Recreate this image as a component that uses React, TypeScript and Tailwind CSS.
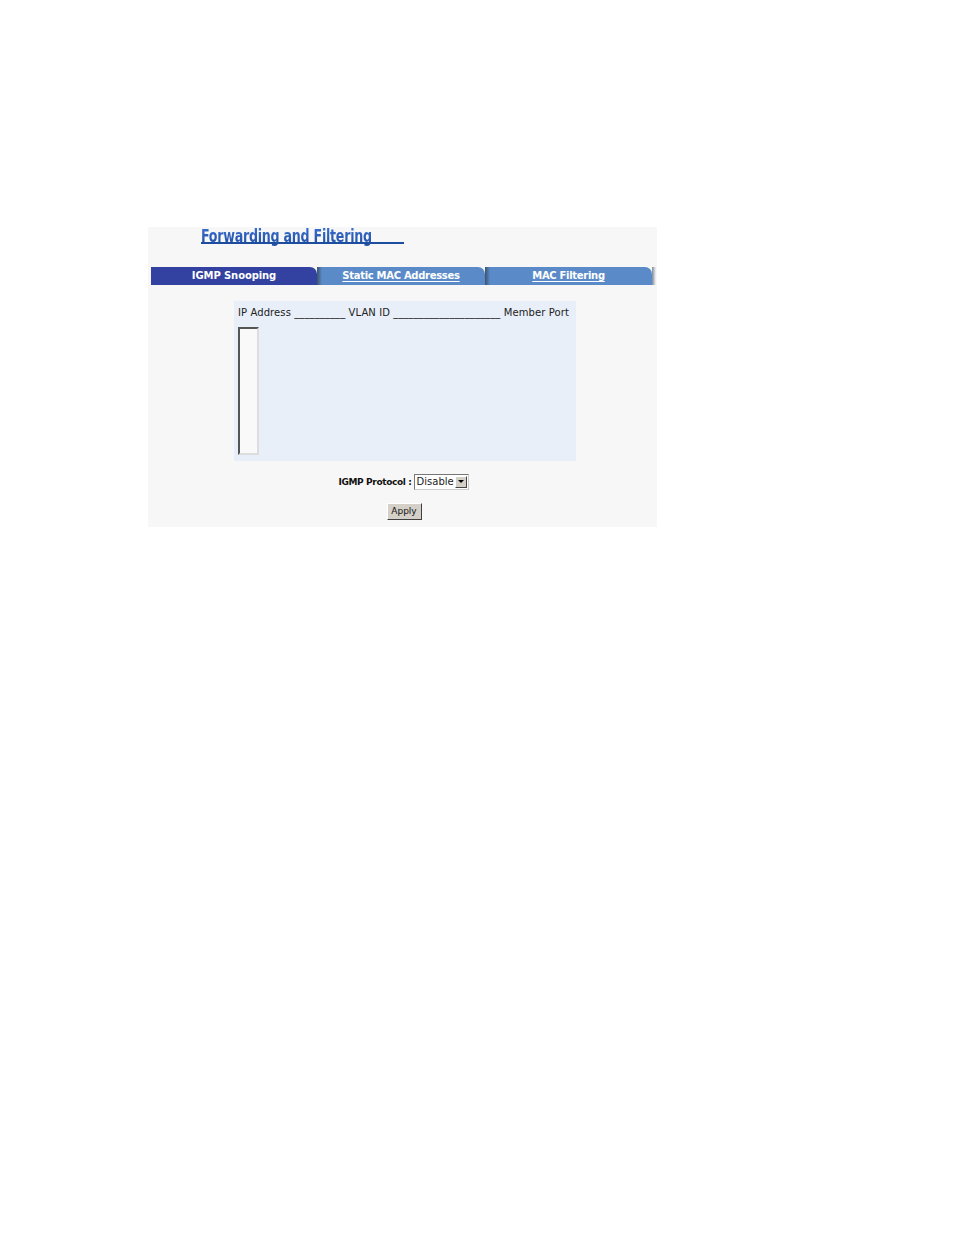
const FONT = "'DejaVu Sans', Verdana, sans-serif"
const TITLE = "'DejaVu Sans Condensed', 'Liberation Sans', sans-serif"

export default function App() {
  return (
    <div className="min-h-[1235px] w-[954px] bg-white pt-[227px]">
      <div className="ml-[148px] flex h-[300px] w-[509px] flex-col bg-[#f7f7f7]" style={{ fontFamily: FONT }}>
        {/* ── Page title ── */}
        <div className="ml-[53px] flex h-[17px] w-[203px] items-start overflow-visible border-b-[2px] border-[#1d4d9e]">
          <span
            className="inline-block whitespace-nowrap bg-gradient-to-b from-[#3a6fd0] to-[#1c4a9c] bg-clip-text pb-[4px] text-[16px] font-bold leading-[15px] tracking-[-0.3px] text-transparent"
            style={{ fontFamily: TITLE, transform: 'scale(0.88, 1.12)', transformOrigin: 'left top' }}
          >
            Forwarding and Filtering
          </span>
        </div>

        {/* ── Tabs ── */}
        <div className="ml-[3px] mt-[23px] flex h-[18px] w-[505px]">
          <div className="flex w-[166px] items-center justify-center rounded-tr-[7px] bg-[#3341a1] text-[10px] font-bold leading-none tracking-[-0.1px] text-white">
            IGMP Snooping
          </div>
          <Tab label="Static MAC Addresses" width="w-[168px]" />
          <Tab label="MAC Filtering" width="w-[167px]" />
          <div className="w-[4px] bg-gradient-to-r from-[#7f8a99] to-[#f7f7f7]" />
        </div>

        {/* ── Member table ── */}
        <div className="ml-[86px] mt-[16px] h-[160px] w-[342px] bg-[#e9eff8] px-[4px] pt-[5px]">
          <p className="whitespace-nowrap text-[10px] leading-[13px] tracking-[0.1px] text-[#222]">
            IP Address __________ VLAN ID _____________________ Member Port
          </p>
          <div className="mt-[8px] h-[128px] w-[21px] border-[2px] border-t-[#555] border-l-[#555] border-r-[#ddd] border-b-[#ddd] bg-[#f9f9f9]" />
        </div>

        {/* ── Protocol select ── */}
        <div className="mt-[13px] flex items-center justify-center gap-[2px] pl-[2px]">
          <span className="text-[9px] font-bold leading-none tracking-[-0.35px] text-[#111]">IGMP Protocol :</span>
          <div className="flex h-[16px] w-[55px] items-center border border-t-[#777] border-l-[#777] border-r-[#ccc] border-b-[#ccc] bg-white">
            <span className="flex-1 pl-[2px] text-[10px] leading-none text-[#222]">Disable</span>
            <div className="mr-[1px] flex h-[12px] w-[12px] items-center justify-center border border-t-white border-l-white border-r-[#444] border-b-[#444] bg-[#d4d0c8]">
              <svg width="6" height="4" viewBox="0 0 6 4">
                <path d="M0 0h6L3 3z" fill="#000" />
              </svg>
            </div>
          </div>
        </div>

        {/* ── Apply ── */}
        <div className="mt-[13px] flex justify-center pl-[3px]">
          <button className="h-[17px] w-[35px] border border-t-white border-l-white border-r-[#404040] border-b-[#404040] bg-[#d4d0c8] text-[9px] leading-none text-[#111]">
            Apply
          </button>
        </div>
      </div>
    </div>
  )
}

function Tab({ label, width }: { label: string; width: string }) {
  return (
    <div className={`relative flex ${width} items-center justify-center rounded-tr-[7px] bg-[#5a8bc8]`}>
      <div className="absolute left-0 top-0 h-full w-[5px] bg-gradient-to-r from-[#3e5270] to-[#5a8bc8]" />
      <span className="text-[10px] font-bold leading-none tracking-[-0.3px] text-white underline underline-offset-[2px]">{label}</span>
    </div>
  )
}
